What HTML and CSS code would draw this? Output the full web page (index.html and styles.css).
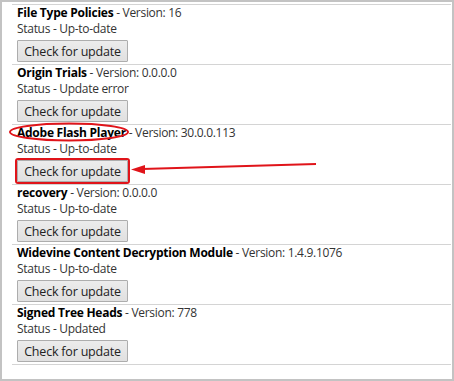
FILE: index.html
```html
<!DOCTYPE html>
<html lang="en">
<head>
  <meta charset="UTF-8">
  <title>Components</title>
  <link rel="stylesheet" href="styles.css">
</head>
<body>
  <div class="frame">
    <div class="item">
      <div class="title"><b>File Type Policies</b> - Version: 16</div>
      <div class="status">Status - Up-to-date</div>
      <button>Check for update</button>
    </div>
    <div class="item">
      <div class="title"><b>Origin Trials</b> - Version: 0.0.0.0</div>
      <div class="status">Status - Update error</div>
      <button>Check for update</button>
    </div>
    <div class="item">
      <div class="title"><b>Adobe Flash Player</b> - Version: 30.0.0.113</div>
      <div class="status">Status - Up-to-date</div>
      <button class="marked">Check for update</button>
    </div>
    <div class="item">
      <div class="title"><b>recovery</b> - Version: 0.0.0.0</div>
      <div class="status">Status - Up-to-date</div>
      <button>Check for update</button>
    </div>
    <div class="item">
      <div class="title"><b>Widevine Content Decryption Module</b> - Version: 1.4.9.1076</div>
      <div class="status">Status - Up-to-date</div>
      <button>Check for update</button>
    </div>
    <div class="item last">
      <div class="title"><b>Signed Tree Heads</b> - Version: 778</div>
      <div class="status">Status - Updated</div>
      <button>Check for update</button>
    </div>

    <!-- annotation drawn over the list -->
    <svg class="marks" width="454" height="381" viewBox="0 0 454 381">
      <ellipse cx="69" cy="132" rx="59" ry="8.5" fill="none" stroke="#e0141a" stroke-width="2"/>
      <line x1="316" y1="164" x2="142" y2="169" stroke="#e0141a" stroke-width="2"/>
      <polygon points="131,169.5 145,165 145,174" fill="#e0141a"/>
    </svg>
  </div>
</body>
</html>
```
FILE: styles.css
```css
body {
  margin: 0;
  font-family: "Open Sans", "Noto Sans", sans-serif;
  font-size: 12px;
  color: #333;
}
.frame {
  position: relative;
  box-sizing: border-box;
  width: 454px;
  height: 381px;
  border: 2px solid #c3c3c3;
  padding: 2px 1px 0 10px;
  background: #fff;
}
.item {
  height: 60px;
  box-sizing: border-box;
  border-top: 1px solid #d4d4d4;
  padding-left: 5px;
}
.item.last {
  border-bottom: 1px solid #d4d4d4;
  height: 61px;
}
.title, .status {
  line-height: 16px;
  white-space: nowrap;
  letter-spacing: -0.3px;
}
.title b {
  color: #000;
  font-weight: bold;
  letter-spacing: -0.25px;
}
button {
  display: block;
  margin-top: 3px;
  width: 111px;
  height: 22px;
  padding: 0;
  font-family: inherit;
  font-size: 12.5px;
  letter-spacing: -0.2px;
  color: #222;
  background: linear-gradient(#ececec, #e0e0e0);
  border: 1px solid #adadad;
  border-radius: 1px;
}
button.marked {
  outline: 2px solid #e0141a;
  outline-offset: 0;
}
.marks {
  position: absolute;
  left: -2px;
  top: -2px;
  pointer-events: none;
}
```
